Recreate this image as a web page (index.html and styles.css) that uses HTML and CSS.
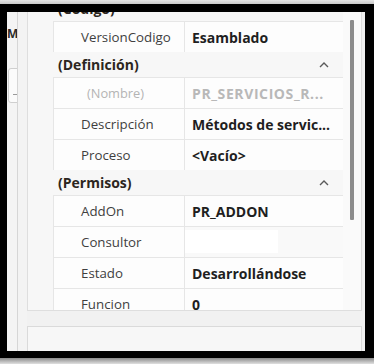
FILE: index.html
```html
<!DOCTYPE html>
<html>
<head>
<meta charset="utf-8">
<link rel="stylesheet" href="styles.css">
</head>
<body>
<div class="top-shade"></div>
<div class="frame">
  <div class="inner">
    <div class="side">
      <div class="side-a">
        <span class="side-m">M</span>
        <div class="side-box"><span class="side-dash"></span></div>
      </div>
      <div class="side-b"></div>
    </div>
    <div class="main">
      <div class="grid">
        <div class="rows">
          <div class="cat"><span class="cat-name">(Código)</span><svg class="chev" width="10" height="6" viewBox="0 0 10 6"><polyline points="1,5 5,1 9,5"/></svg></div>
          <div class="prop"><span class="pname">VersionCodigo</span><span class="pval">Esamblado</span></div>
          <div class="cat"><span class="cat-name">(Definición)</span><svg class="chev" width="10" height="6" viewBox="0 0 10 6"><polyline points="1,5 5,1 9,5"/></svg></div>
          <div class="prop"><span class="pname dim">(Nombre)</span><span class="pval dim">PR_SERVICIOS_R...</span></div>
          <div class="prop"><span class="pname">Descripción</span><span class="pval">Métodos de servic...</span></div>
          <div class="prop"><span class="pname">Proceso</span><span class="pval">&lt;Vacío&gt;</span></div>
          <div class="cat"><span class="cat-name">(Permisos)</span><svg class="chev" width="10" height="6" viewBox="0 0 10 6"><polyline points="1,5 5,1 9,5"/></svg></div>
          <div class="prop"><span class="pname">AddOn</span><span class="pval">PR_ADDON</span></div>
          <div class="prop"><span class="pname">Consultor</span><span class="pval empty"><span class="edit"></span></span></div>
          <div class="prop"><span class="pname">Estado</span><span class="pval">Desarrollándose</span></div>
          <div class="prop"><span class="pname">Funcion</span><span class="pval">0</span></div>
        </div>
        <div class="scroll"><div class="thumb"></div></div>
      </div>
      <div class="desc"></div>
    </div>
  </div>
</div>
<div class="bottom-shade"></div>
</body>
</html>
```

FILE: styles.css
```css
html, body {
  margin: 0;
  padding: 0;
}
body {
  width: 374px;
  height: 364px;
  overflow: hidden;
  background: #ffffff;
  font-family: "Open Sans", "Noto Sans", sans-serif;
  font-size: 13.3px;
}
.top-shade {
  height: 4px;
  background: linear-gradient(#e6e6e6, #c8c8c8);
}
.frame {
  box-sizing: border-box;
  height: 354px;
  border-style: solid;
  border-color: #000;
  border-width: 8px 9px 7px 7px;
  overflow: hidden;
}
.bottom-shade {
  height: 6px;
  background: linear-gradient(#8a8a8a, #e0e0e0);
}
.inner {
  display: flex;
  height: 339px;
  background: #f1f1f1;
}
.side {
  display: flex;
  width: 20px;
  flex: none;
}
.side-a {
  width: 10px;
  border-right: 1px solid #d6d6d6;
  background: #f4f4f4;
  position: relative;
  overflow: hidden;
}
.side-m {
  position: absolute;
  left: 0;
  top: 13px;
  font-weight: 700;
  font-size: 12px;
  color: #2b2b2b;
}
.side-box {
  position: absolute;
  left: 1px;
  top: 56px;
  width: 20px;
  height: 33px;
  border: 1px solid #cfcfcf;
  border-radius: 3px;
  background: #fbfbfb;
}
.side-dash {
  position: absolute;
  left: 4px;
  top: 25px;
  width: 4px;
  height: 1px;
  background: #9a9a9a;
}
.side-b {
  flex: 1;
  background: #f3f3f3;
}
.main {
  flex: 1;
  display: flex;
  flex-direction: column;
  padding-right: 3px;
}
.grid {
  height: 299px;
  box-sizing: border-box;
  border: 1px solid #dedede;
  border-top: none;
  display: flex;
  overflow: hidden;
  background: #f7f7f7;
}
.rows {
  width: 315px;
  margin-top: -16px;
  flex: none;
}
.cat {
  height: 25px;
  display: flex;
  align-items: center;
  padding-left: 30px;
  padding-right: 14px;
  background: #f7f7f7;
}
.cat-name {
  flex: 1;
  font-weight: 700;
  color: #2c2620;
  font-size: 14px;
}
.chev {
  fill: none;
  stroke: #5a5a5a;
  stroke-width: 1.4;
}
.prop {
  height: 31px;
  display: flex;
  padding-left: 25px;
}
.pname, .pval {
  box-sizing: border-box;
  border-top: 1px solid #e6e6e6;
  border-left: 1px solid #e6e6e6;
  background: #fdfdfd;
  display: flex;
  align-items: center;
  white-space: nowrap;
  overflow: hidden;
}
.pname {
  width: 131px;
  padding-left: 27px;
  color: #3f3f3f;
}
.pval {
  flex: 1;
  padding-left: 7px;
  font-weight: 700;
  color: #1f1f1f;
  font-size: 14px;
}
.pname.dim {
  color: #b4b4b4;
  padding-left: 33px;
  font-size: 12.8px;
}
.pval.dim {
  color: #b8b8b8;
  letter-spacing: 0.6px;
}
.empty {
  background: #f9f9f9;
  align-items: stretch;
  padding: 3px 0 4px 0;
}
.edit {
  width: 93px;
  background: #ffffff;
}
.scroll {
  flex: 1;
  background: #fafafa;
  position: relative;
}
.thumb {
  position: absolute;
  left: 7px;
  top: 8px;
  width: 4px;
  height: 200px;
  background: #8c8c8c;
  border-radius: 1px;
}
.desc {
  margin-top: 15px;
  flex: 1;
  border: 1px solid #dadada;
  border-bottom: none;
  background: #f7f7f7;
}
```
